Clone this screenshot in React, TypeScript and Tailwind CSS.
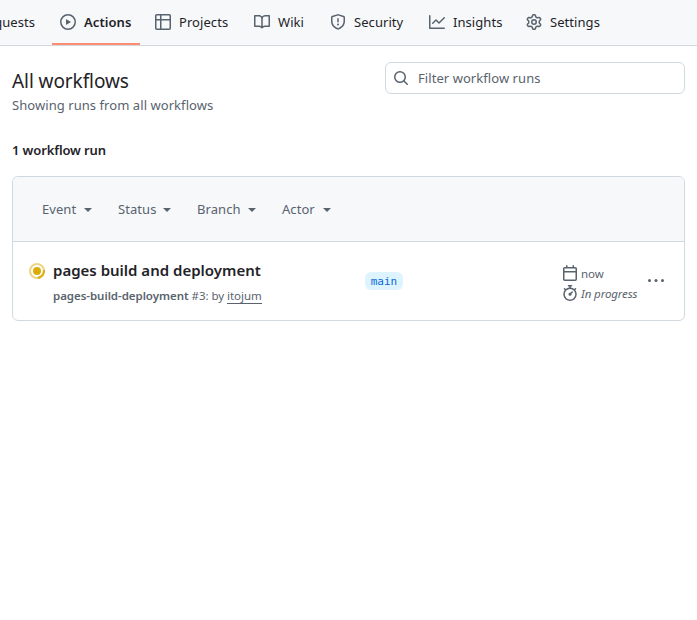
import type { ReactNode } from "react";

const icons = {
  play: "M8 0a8 8 0 1 1 0 16A8 8 0 0 1 8 0ZM1.5 8a6.5 6.5 0 1 0 13 0 6.5 6.5 0 0 0-13 0Zm4.879-2.773 4.264 2.559a.25.25 0 0 1 0 .428l-4.264 2.559A.25.25 0 0 1 6 10.559V5.442a.25.25 0 0 1 .379-.215Z",
  table: "M0 1.75C0 .784.784 0 1.75 0h12.5C15.216 0 16 .784 16 1.75v12.5A1.75 1.75 0 0 1 14.25 16H1.75A1.75 1.75 0 0 1 0 14.25ZM6.5 6.5v8h7.75a.25.25 0 0 0 .25-.25V6.5Zm8-1.5V1.75a.25.25 0 0 0-.25-.25H6.5V5Zm-13 1.5v7.75c0 .138.112.25.25.25H5v-8ZM5 5V1.5H1.75a.25.25 0 0 0-.25.25V5Z",
  book: "M0 1.75A.75.75 0 0 1 .75 1h4.253c1.227 0 2.317.59 3 1.501A3.743 3.743 0 0 1 11.006 1h4.245a.75.75 0 0 1 .75.75v10.5a.75.75 0 0 1-.75.75h-4.507a2.25 2.25 0 0 0-1.591.659l-.622.621a.75.75 0 0 1-1.06 0l-.622-.621A2.25 2.25 0 0 0 5.258 13H.75a.75.75 0 0 1-.75-.75Zm7.251 10.324.004-5.073-.002-2.253A2.25 2.25 0 0 0 5.003 2.5H1.5v9h3.757a3.75 3.75 0 0 1 1.994.574ZM8.755 4.75l-.004 7.322a3.752 3.752 0 0 1 1.992-.572H14.5v-9h-3.495a2.25 2.25 0 0 0-2.25 2.25Z",
  shield: "M7.467.133a1.748 1.748 0 0 1 1.066 0l5.25 1.68A1.75 1.75 0 0 1 15 3.48V7c0 1.566-.32 3.182-1.303 4.682-.983 1.498-2.585 2.813-5.032 3.855a1.697 1.697 0 0 1-1.33 0c-2.447-1.042-4.049-2.357-5.032-3.855C1.32 10.182 1 8.566 1 7V3.48a1.75 1.75 0 0 1 1.217-1.667Zm.61 1.429a.25.25 0 0 0-.153 0l-5.25 1.68a.25.25 0 0 0-.174.238V7c0 1.358.275 2.666 1.057 3.86.784 1.194 2.121 2.34 4.366 3.297a.196.196 0 0 0 .154 0c2.245-.956 3.582-2.104 4.366-3.298C13.225 9.666 13.5 8.36 13.5 7V3.48a.251.251 0 0 0-.174-.237l-5.25-1.68ZM8.75 4.75v3a.75.75 0 0 1-1.5 0v-3a.75.75 0 0 1 1.5 0ZM9 10.5a1 1 0 1 1-2 0 1 1 0 0 1 2 0Z",
  graph: "M1.5 1.75V13.5h13.75a.75.75 0 0 1 0 1.5H.75a.75.75 0 0 1-.75-.75V1.75a.75.75 0 0 1 1.5 0Zm14.28 2.53-5.25 5.25a.75.75 0 0 1-1.06 0L7 7.06 4.28 9.78a.751.751 0 0 1-1.042-.018.751.751 0 0 1-.018-1.042l3.25-3.25a.75.75 0 0 1 1.06 0L10 7.94l4.72-4.72a.751.751 0 0 1 1.042.018.751.751 0 0 1 .018 1.042Z",
  gear: "M8 0a8.2 8.2 0 0 1 .701.031C9.444.095 9.99.645 10.16 1.29l.288 1.107c.018.066.079.158.212.224.231.114.454.243.668.386.123.082.233.09.299.071l1.103-.303c.644-.176 1.392.021 1.82.63.27.385.506.792.704 1.218.315.675.111 1.422-.364 1.891l-.814.806c-.049.048-.098.147-.088.294.016.257.016.515 0 .772-.01.147.038.246.088.294l.814.806c.475.469.679 1.216.364 1.891a7.977 7.977 0 0 1-.704 1.217c-.428.61-1.176.807-1.82.63l-1.102-.302c-.067-.019-.177-.011-.3.071a5.909 5.909 0 0 1-.668.386c-.133.066-.194.158-.211.224l-.29 1.106c-.168.646-.715 1.196-1.458 1.26a8.006 8.006 0 0 1-1.402 0c-.743-.064-1.289-.614-1.458-1.26l-.289-1.106c-.018-.066-.079-.158-.212-.224a5.738 5.738 0 0 1-.668-.386c-.123-.082-.233-.09-.299-.071l-1.103.303c-.644.176-1.392-.021-1.82-.63a8.12 8.12 0 0 1-.704-1.218c-.315-.675-.111-1.422.363-1.891l.815-.806c.05-.048.098-.147.088-.294a6.214 6.214 0 0 1 0-.772c.01-.147-.038-.246-.088-.294l-.815-.806C.635 6.045.431 5.298.746 4.623a7.92 7.92 0 0 1 .704-1.217c.428-.61 1.176-.807 1.82-.63l1.102.302c.067.019.177.011.3-.071.214-.143.437-.272.668-.386.133-.066.194-.158.211-.224l.29-1.106C6.009.645 6.556.095 7.299.03 7.53.01 7.764 0 8 0Zm-.571 1.525c-.036.003-.108.036-.137.146l-.289 1.105c-.147.561-.549.967-.998 1.189-.173.086-.34.183-.5.29-.417.278-.97.423-1.529.27l-1.103-.303c-.109-.03-.175.016-.195.045-.22.312-.412.644-.573.99-.014.031-.021.11.059.19l.815.806c.411.406.562.957.53 1.456a4.709 4.709 0 0 0 0 .582c.032.499-.119 1.05-.53 1.456l-.815.806c-.081.08-.073.159-.059.19.162.346.353.677.573.989.02.03.085.076.195.046l1.102-.303c.56-.153 1.113-.008 1.53.27.161.107.328.204.501.29.447.222.85.629.997 1.189l.289 1.105c.029.109.101.143.137.146a6.6 6.6 0 0 0 1.142 0c.036-.003.108-.036.137-.146l.289-1.105c.147-.561.549-.967.998-1.189.173-.086.34-.183.5-.29.417-.278.97-.423 1.529-.27l1.103.303c.109.029.175-.016.195-.045.22-.313.411-.644.573-.99.014-.031.021-.11-.059-.19l-.815-.806c-.411-.406-.562-.957-.53-1.456a4.709 4.709 0 0 0 0-.582c-.032-.499.119-1.05.53-1.456l.815-.806c.081-.08.073-.159.059-.19a6.464 6.464 0 0 0-.573-.989c-.02-.03-.085-.076-.195-.046l-1.102.303c-.56.153-1.113.008-1.53-.27a4.44 4.44 0 0 0-.501-.29c-.447-.222-.85-.629-.997-1.189l-.289-1.105c-.029-.11-.101-.143-.137-.146a6.6 6.6 0 0 0-1.142 0ZM11 8a3 3 0 1 1-6 0 3 3 0 0 1 6 0ZM9.5 8a1.5 1.5 0 1 0-3.001.001A1.5 1.5 0 0 0 9.5 8Z",
  search: "M10.68 11.74a6 6 0 0 1-7.922-8.982 6 6 0 0 1 8.982 7.922l3.04 3.04a.749.749 0 0 1-.326 1.275.749.749 0 0 1-.734-.215ZM11.5 7a4.499 4.499 0 1 0-8.997 0A4.499 4.499 0 0 0 11.5 7Z",
  calendar: "M4.75 0a.75.75 0 0 1 .75.75V2h5V.75a.75.75 0 0 1 1.5 0V2h1.25c.966 0 1.75.784 1.75 1.75v10.5A1.75 1.75 0 0 1 13.25 16H2.75A1.75 1.75 0 0 1 1 14.25V3.75C1 2.784 1.784 2 2.75 2H4V.75A.75.75 0 0 1 4.75 0ZM2.5 7.5v6.75c0 .138.112.25.25.25h10.5a.25.25 0 0 0 .25-.25V7.5Zm10.75-4H2.75a.25.25 0 0 0-.25.25V6h11V3.75a.25.25 0 0 0-.25-.25Z",
  stopwatch: "M5.75.75A.75.75 0 0 1 6.5 0h3a.75.75 0 0 1 0 1.5h-.75v1l-.001.041a6.724 6.724 0 0 1 3.464 1.435l.007-.006.75-.75a.749.749 0 0 1 1.275.326.749.749 0 0 1-.215.734l-.75.75-.006.007a6.75 6.75 0 1 1-10.548 0L2.72 5.03l-.75-.75a.751.751 0 0 1 .018-1.042.751.751 0 0 1 1.042-.018l.75.75.007.006A6.72 6.72 0 0 1 7.25 2.541V1.5H6.5a.75.75 0 0 1-.75-.75ZM8 14.5a5.25 5.25 0 1 0-.001-10.501A5.25 5.25 0 0 0 8 14.5Zm.389-6.7 1.33-1.33a.75.75 0 1 1 1.061 1.06L9.45 8.861A1.503 1.503 0 0 1 8 10.75a1.499 1.499 0 1 1 .389-2.95Z",
};

function Icon({ name, className = "" }: { name: keyof typeof icons; className?: string }) {
  return (
    <svg viewBox="0 0 16 16" className={`size-4 shrink-0 fill-[#59636e] ${className}`}>
      <path d={icons[name]} />
    </svg>
  );
}

function Tab({ icon, width, active, children }: { icon: keyof typeof icons; width: string; active?: boolean; children: ReactNode }) {
  return (
    <a className={`flex h-[45px] shrink-0 items-center gap-2 border-b-2 pl-2 ${width} ${active ? "border-[#fd8c73] font-semibold" : "border-transparent"}`}>
      <Icon name={icon} />
      <span className="mt-0.5">{children}</span>
    </a>
  );
}

function Filter({ width, children }: { width: string; children: ReactNode }) {
  return (
    <button className={`flex shrink-0 items-center justify-between ${width}`}>
      <span>{children}</span>
      <span className="mt-0.5 border-x-4 border-t-4 border-x-transparent border-t-[#59636e]" />
    </button>
  );
}

export default function App() {
  return (
    <div className="h-[620px] w-[697px] overflow-hidden bg-white font-['Noto_Sans',sans-serif] text-[13px] leading-[21px] tracking-[0.06px] whitespace-nowrap text-[#1f2328]">
      <nav className="flex h-[46px] border-b border-[#d1d9e0] bg-[#f6f8fa]">
        <div className="flex h-[45px] w-[52px] shrink-0 justify-end border-b-2 border-transparent pr-[17px] leading-[45px]">
          <span>Pull requests</span>
        </div>
        <Tab icon="play" width="w-[88px] mr-[7px]" active>Actions</Tab>
        <Tab icon="table" width="w-[99px]">Projects</Tab>
        <Tab icon="book" width="w-[76px]">Wiki</Tab>
        <Tab icon="shield" width="w-[99px]">Security</Tab>
        <Tab icon="graph" width="w-[97px]">Insights</Tab>
        <Tab icon="gear" width="w-[91px]">Settings</Tab>
      </nav>
      <main className="px-3 pt-4">
        <header className="flex h-[68px] items-start justify-between">
          <div className="pt-1">
            <h1 className="text-[19px] leading-[30px] tracking-[-0.08px]">All workflows</h1>
            <p className="-mt-px text-[#59636e]">Showing runs from all workflows</p>
          </div>
          <label className="flex h-8 w-[300px] items-center gap-[9px] rounded-md border border-[#d1d9e0] px-[7px] text-[#59636e]">
            <Icon name="search" />
            <span>Filter workflow runs</span>
          </label>
        </header>
        <h2 className="mt-[10px] font-semibold tracking-[-0.12px]">1 workflow run</h2>
        <section className="mt-[15px] h-[145px] rounded-md border border-[#d1d9e0]">
          <div className="flex h-[65px] items-center gap-[26px] rounded-t-md border-b border-[#d1d9e0] bg-[#f6f8fa] pl-[29px] text-[#59636e]">
            <Filter width="w-[50px]">Event</Filter>
            <Filter width="w-[53px]">Status</Filter>
            <Filter width="w-[59px]">Branch</Filter>
            <Filter width="w-[49px]">Actor</Filter>
          </div>
          <div className="flex h-[78px] items-start">
            <svg viewBox="0 0 16 16" className="mt-[21px] ml-4 size-4 shrink-0" fill="none">
              <circle cx="8" cy="8" r="7" stroke="#dbab0a" strokeWidth="2" opacity=".5" />
              <path d="M14.9 7a7 7 0 0 1-6 7.9" stroke="#dbab0a" strokeWidth="2" />
              <circle cx="8" cy="8" r="4" fill="#dbab0a" />
            </svg>
            <div className="ml-2 w-[312px] pt-4">
              <h3 className="text-[15px] leading-6 font-semibold tracking-normal">pages build and deployment</h3>
              <p className="mt-[5px] text-[11.5px] leading-[18px] tracking-[-0.04px] text-[#59636e]">
                <b className="font-semibold">pages-build-deployment</b> #3: by <a className="border-b border-[#59636e]">itojum</a>
              </p>
            </div>
            <div className="mt-[30px] w-[197px]">
              <span className="block h-[18px] w-[38px] rounded-md bg-[#ddf4ff] text-center font-['DejaVu_Sans_Mono',monospace] text-[11px] leading-[19px] tracking-normal text-[#0969da]">main</span>
            </div>
            <div className="mt-[22px] w-[86px] text-[11.5px] leading-5 tracking-[-0.1px] text-[#59636e]">
              <div className="flex items-center gap-[3px]"><Icon name="calendar" className="-mt-0.5" /><span>now</span></div>
              <div className="flex items-center gap-[3px]"><Icon name="stopwatch" className="-mt-0.5" /><i>In progress</i></div>
            </div>
            <svg viewBox="0 0 16 16" className="mt-[30px] size-4 shrink-0 fill-[#59636e]">
              <circle cx="1.5" cy="8.5" r="1.5" /><circle cx="8" cy="8.5" r="1.5" /><circle cx="14.5" cy="8.5" r="1.5" />
            </svg>
          </div>
        </section>
      </main>
    </div>
  );
}
